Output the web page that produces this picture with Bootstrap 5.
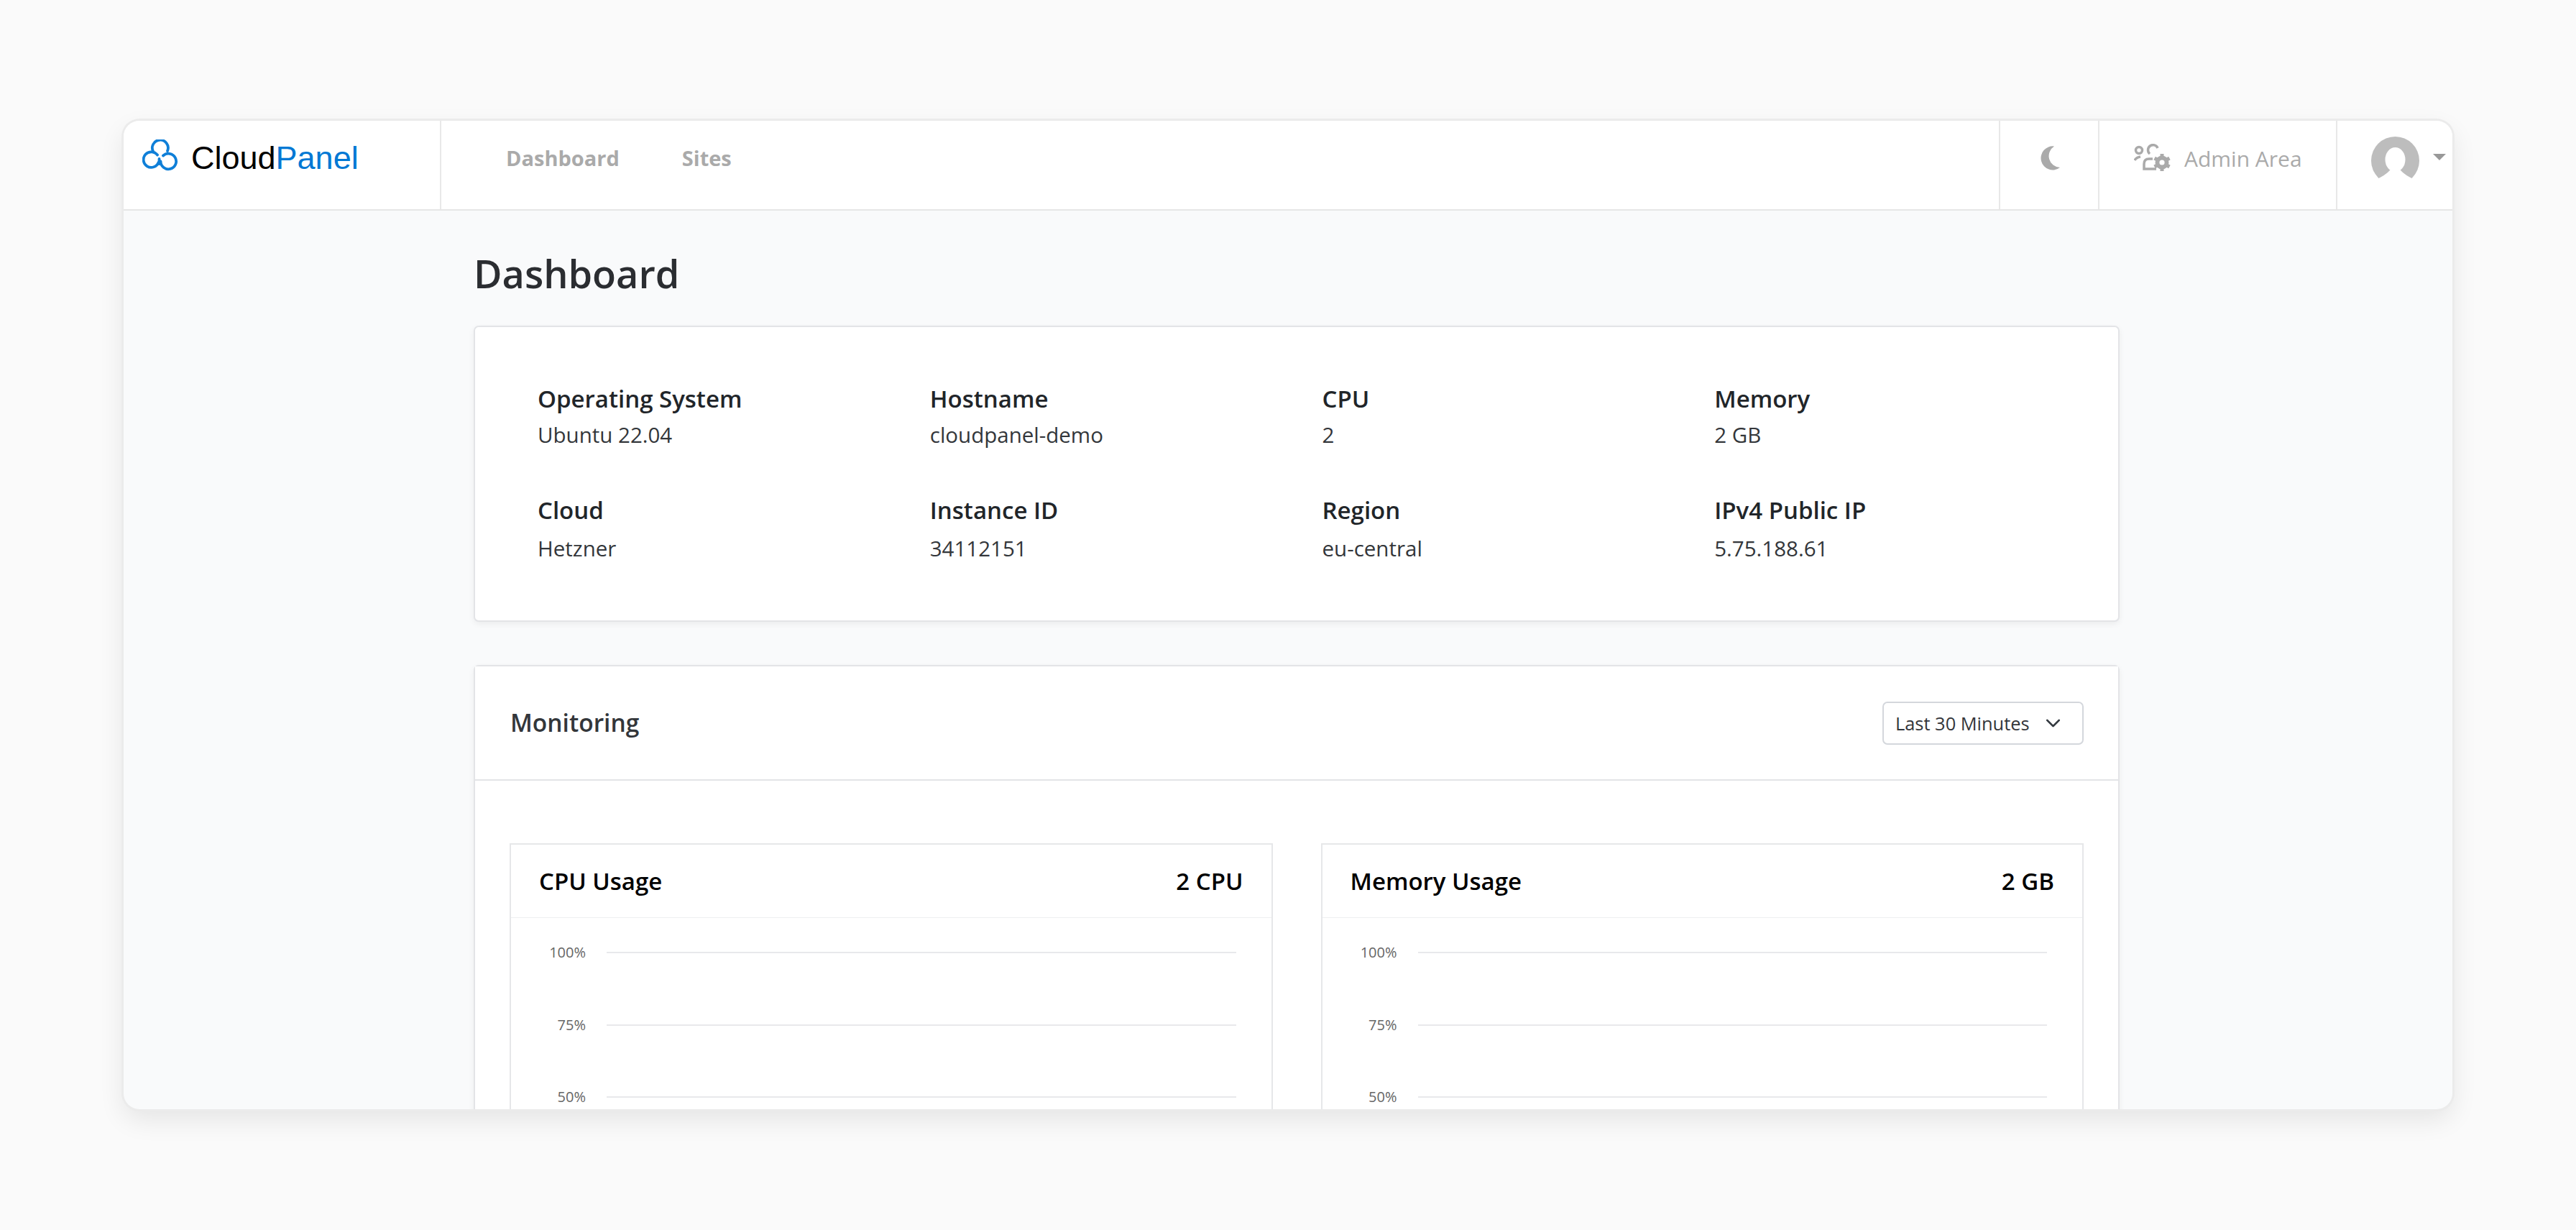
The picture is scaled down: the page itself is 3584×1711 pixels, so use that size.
<!DOCTYPE html>
<html lang="en">
<head>
<meta charset="utf-8">
<title>CloudPanel Dashboard</title>
<link href="https://cdn.jsdelivr.net/npm/bootstrap@5.3.0/dist/css/bootstrap.min.css" rel="stylesheet">
<style>
html,body{height:100%;margin:0;background:#fafafa;overflow:hidden}
body{font-family:"Open Sans","Noto Sans",sans-serif;padding:168px 172px 0}
.cp-win{width:3240px;height:1375px;border-radius:22px;overflow:hidden;background:#f9fafb;box-shadow:0 0 0 3px #ebebeb,0 14px 36px rgba(0,0,0,.09)}
.cp-bar{height:125px;flex:none;background:#fff;border-bottom:2px solid #e6e6e6;padding:0;flex-wrap:nowrap;align-items:stretch;justify-content:flex-start}
.cp-brand{width:442px;border-right:2px solid #e8e8e8;padding:26px 0 0 26px;display:flex;align-items:flex-start;gap:18px;margin:0;font:45px/52px "Liberation Sans",sans-serif;color:#000}
.cp-brand span{color:#0078d4}
.cp-links{padding:30px 0 0 90px;gap:87px;flex:1}
.cp-link{font-weight:700;font-size:29px;line-height:44px;color:#aaa;padding:0;text-decoration:none}
.cp-cell{border-left:2px solid #e8e8e8;display:flex;align-items:flex-start;padding-top:35px}
.cp-moon{width:138px;padding-left:55px}
.cp-admin{width:331px;padding:32px 0 0 48px;gap:18px;color:#aaa;font-size:30px;line-height:42px}
.cp-user{width:162px;padding:22px 0 0 47px;gap:19px}
.cp-care{width:0;height:0;border:9px solid transparent;border-top:9px solid #999;border-bottom:0;margin-top:24px}
.cp-main{width:2290px;margin-left:487px;padding-top:49px}
.cp-h{font-size:54px;font-weight:600;line-height:76px;color:#2b2d31;margin:0 0 35px}
.cp-card{border:2px solid #e3e4e7;border-radius:7px;background:#fff;box-shadow:0 3px 8px rgba(0,0,0,.06)}
.cp-info{height:412px;padding:75px 16px 0 87px;margin-bottom:60px}
.cp-info .row{--bs-gutter-x:0}
.cp-t{font-size:33px;font-weight:600;line-height:50px;color:#212529}
.cp-v{font-size:29.500px;line-height:50px;color:#33363a}
.cp-row2{margin-top:55px}
.cp-row2 .cp-v{margin-top:3px}
.cp-mon-h{height:159px;flex:none;padding:0 48px 0 49px;border-bottom:2px solid #e3e4e7;background:#fff}
.cp-mon-t{font-size:33.500px;font-weight:600;color:#33363a}
.cp-sel{width:280px;height:60px;padding:0 0 0 16px;font-size:25.400px;line-height:56px;color:#33363a;border:2px solid #d4d7dc;border-radius:7px;background-size:27px 22px;background-position:right 27px center}
.cp-mon-b{padding:87px 48px 0 48px}
.cp-chart-row{--bs-gutter-x:67px}
.cp-chart{border:2px solid #e6e7e9;background:#fff;height:600px}
.cp-chart-h{height:102px;margin-bottom:-2px;padding:0 39px;border-bottom:1px solid #eeeff1;font-size:33px;font-weight:600;color:#000}
.cp-line{height:100.500px;padding-right:49px;gap:29px}
.cp-lab{width:104px;text-align:right;font-size:20px;color:#666;line-height:24px}
.cp-rule{flex:1;height:2px;background:#e8e9eb}
</style>
</head>
<body>
<div class="cp-win d-flex flex-column">
  <nav class="navbar cp-bar">
    <a class="navbar-brand cp-brand" href="#">
      <svg width="50" height="44" viewBox="0 0 50 44" fill="none" stroke="#0f7fd8" stroke-width="3.800" stroke-linecap="round">
        <path d="M15.500 17.500A11 11 0 1 1 35 16"/>
        <path d="M21 21.500A10.800 10.800 0 1 0 22.500 32"/>
        <path d="M29 22.500A10.800 10.800 0 1 1 25.500 30.500"/>
        <path d="M23.500 27V34"/>
      </svg>
      <div>Cloud<span>Panel</span></div>
    </a>
    <div class="navbar-nav flex-row cp-links">
      <a class="nav-link cp-link" href="#">Dashboard</a>
      <a class="nav-link cp-link" href="#">Sites</a>
    </div>
    <div class="cp-cell cp-moon">
      <svg width="30" height="34" viewBox="0 0 30 34" fill="#aaa"><path d="M20 0.500A16.500 16.500 0 1 0 28 30A16 16 0 0 1 20 0.500Z"/></svg>
    </div>
    <div class="cp-cell cp-admin">
      <svg width="52" height="38" viewBox="0 0 52 38" fill="none" stroke="#aaa" stroke-width="3.500">
        <circle cx="7" cy="9" r="4.500"/>
        <path d="M22 14A7 7 0 1 1 33 6"/>
        <path d="M1 23Q3 19 9 18"/>
        <path d="M26 21H21Q14 21 14 28V35H31"/>
        <circle cx="39" cy="26" r="9.500" fill="#aaa" stroke="none"/>
        <path d="M39 14V38M28.600 20L49.400 32M28.600 32L49.400 20" stroke-width="5"/>
        <circle cx="39" cy="26" r="3.600" fill="#fff" stroke="none"/>
      </svg>
      <span>Admin Area</span>
    </div>
    <div class="cp-cell cp-user">
      <svg width="67" height="67" viewBox="0 0 67 67">
        <circle cx="33.500" cy="33.500" r="33.500" fill="#bdbdbd"/>
        <ellipse cx="33.500" cy="32" rx="14" ry="17" fill="#fff"/>
        <path d="M6 60Q20 54 27 46H40Q47 54 61 60V67H6Z" fill="#fff"/>
      </svg>
      <span class="cp-care"></span>
    </div>
  </nav>
  <main class="cp-main">
    <h1 class="cp-h">Dashboard</h1>
    <div class="card cp-card cp-info">
      <div class="row">
        <div class="col-3"><div class="cp-t">Operating System</div><div class="cp-v">Ubuntu 22.04</div></div>
        <div class="col-3"><div class="cp-t">Hostname</div><div class="cp-v">cloudpanel-demo</div></div>
        <div class="col-3"><div class="cp-t">CPU</div><div class="cp-v">2</div></div>
        <div class="col-3"><div class="cp-t">Memory</div><div class="cp-v">2 GB</div></div>
      </div>
      <div class="row cp-row2">
        <div class="col-3"><div class="cp-t">Cloud</div><div class="cp-v">Hetzner</div></div>
        <div class="col-3"><div class="cp-t">Instance ID</div><div class="cp-v">34112151</div></div>
        <div class="col-3"><div class="cp-t">Region</div><div class="cp-v">eu-central</div></div>
        <div class="col-3"><div class="cp-t">IPv4 Public IP</div><div class="cp-v">5.75.188.61</div></div>
      </div>
    </div>
    <div class="card cp-card">
      <div class="d-flex align-items-center justify-content-between cp-mon-h">
        <div class="cp-mon-t">Monitoring</div>
        <select class="form-select cp-sel"><option>Last 30 Minutes</option></select>
      </div>
      <div class="cp-mon-b">
        <div class="row cp-chart-row">
          <div class="col-6">
            <div class="cp-chart">
              <div class="d-flex align-items-center justify-content-between cp-chart-h"><span>CPU Usage</span><span>2 CPU</span></div>
              <div class="d-flex align-items-center cp-line"><span class="cp-lab">100%</span><span class="cp-rule"></span></div>
              <div class="d-flex align-items-center cp-line"><span class="cp-lab">75%</span><span class="cp-rule"></span></div>
              <div class="d-flex align-items-center cp-line"><span class="cp-lab">50%</span><span class="cp-rule"></span></div>
            </div>
          </div>
          <div class="col-6">
            <div class="cp-chart">
              <div class="d-flex align-items-center justify-content-between cp-chart-h"><span>Memory Usage</span><span>2 GB</span></div>
              <div class="d-flex align-items-center cp-line"><span class="cp-lab">100%</span><span class="cp-rule"></span></div>
              <div class="d-flex align-items-center cp-line"><span class="cp-lab">75%</span><span class="cp-rule"></span></div>
              <div class="d-flex align-items-center cp-line"><span class="cp-lab">50%</span><span class="cp-rule"></span></div>
            </div>
          </div>
        </div>
      </div>
    </div>
  </main>
</div>
<script src="https://cdn.jsdelivr.net/npm/bootstrap@5.3.0/dist/js/bootstrap.bundle.min.js"></script>
</body>
</html>
